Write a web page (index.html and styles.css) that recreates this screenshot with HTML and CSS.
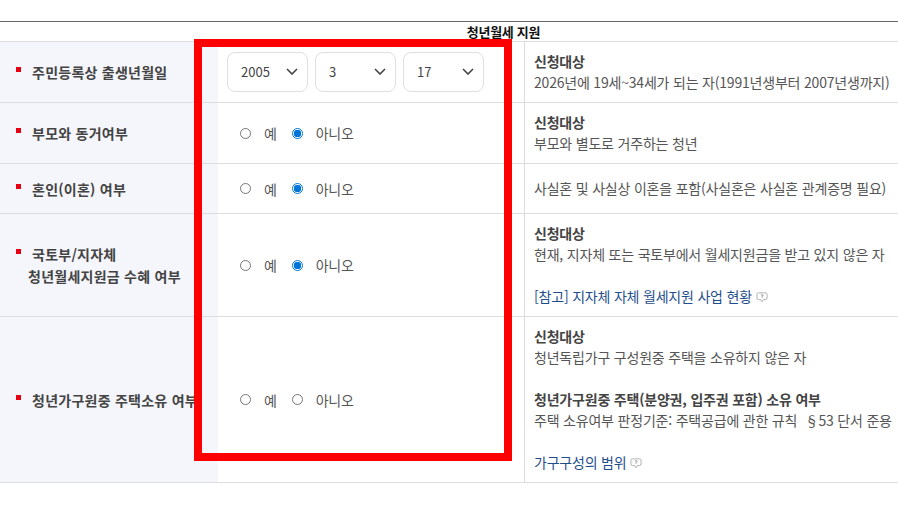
FILE: index.html
```html
<!DOCTYPE html>
<html lang="ko">
    <head>
        <title>청년월세 지원</title>
        <meta charset="utf-8">
        <link rel="stylesheet" href="styles.css">
    </head>
    <body>
        <main class="page">
            <table class="check-table">
                <colgroup>
                    <col class="col-label">
                    <col class="col-field">
                    <col class="col-desc">
                </colgroup>
                <thead>
                    <tr class="row-head">
                        <th colspan="3">청년월세 지원</th>
                    </tr>
                </thead>
                <tbody>
                    <tr class="row-birth">
                        <th><i class="bullet"></i>주민등록상 출생년월일</th>
                        <td class="field">
                            <div class="selects">
                                <div class="select"><span>2005</span><svg class="chev" viewBox="0 0 12 7"><path d="M1 1l5 5 5-5"/></svg></div>
                                <div class="select"><span>3</span><svg class="chev" viewBox="0 0 12 7"><path d="M1 1l5 5 5-5"/></svg></div>
                                <div class="select"><span>17</span><svg class="chev" viewBox="0 0 12 7"><path d="M1 1l5 5 5-5"/></svg></div>
                            </div>
                        </td>
                        <td class="desc">
                            <strong>신청대상</strong><br>
                            2026년에 19세~34세가 되는 자(1991년생부터 2007년생까지)
                        </td>
                    </tr>
                    <tr class="row-parents">
                        <th><i class="bullet"></i>부모와 동거여부</th>
                        <td class="field">
                            <div class="radios">
                                <label><input type="radio" name="parents">예</label>
                                <label><input type="radio" name="parents" checked>아니오</label>
                            </div>
                        </td>
                        <td class="desc">
                            <strong>신청대상</strong><br>
                            부모와 별도로 거주하는 청년
                        </td>
                    </tr>
                    <tr class="row-marriage">
                        <th><i class="bullet"></i>혼인(이혼) 여부</th>
                        <td class="field">
                            <div class="radios">
                                <label><input type="radio" name="marriage">예</label>
                                <label><input type="radio" name="marriage" checked>아니오</label>
                            </div>
                        </td>
                        <td class="desc">사실혼 및 사실상 이혼을 포함(사실혼은 사실혼 관계증명 필요)</td>
                    </tr>
                    <tr class="row-subsidy">
                        <th><i class="bullet"></i>국토부/지자체<br>청년월세지원금 수혜 여부</th>
                        <td class="field">
                            <div class="radios">
                                <label><input type="radio" name="subsidy">예</label>
                                <label><input type="radio" name="subsidy" checked>아니오</label>
                            </div>
                        </td>
                        <td class="desc">
                            <strong>신청대상</strong><br>
                            현재, 지자체 또는 국토부에서 월세지원금을 받고 있지 않은 자<br>
                            <br>
                            <a href="#">[참고] 지자체 자체 월세지원 사업 현황</a>
                            <svg class="help" viewBox="0 0 14 13"><path d="M3 1h8a2 2 0 0 1 2 2v4a2 2 0 0 1-2 2H8.5L7 11.5 5.5 9H3a2 2 0 0 1-2-2V3a2 2 0 0 1 2-2z"/><path class="mark" d="M5.8 3.8c.2-.7 2.4-.8 2.4.4 0 .8-1.2.8-1.2 1.5M7 6.4v.7"/></svg>
                        </td>
                    </tr>
                    <tr class="row-house">
                        <th><i class="bullet"></i>청년가구원중 주택소유 여부</th>
                        <td class="field">
                            <div class="radios">
                                <label><input type="radio" name="house">예</label>
                                <label><input type="radio" name="house">아니오</label>
                            </div>
                        </td>
                        <td class="desc">
                            <strong>신청대상</strong><br>
                            청년독립가구 구성원중 주택을 소유하지 않은 자<br>
                            <br>
                            <strong>청년가구원중 주택(분양권, 입주권 포함) 소유 여부</strong><br>
                            주택 소유여부 판정기준: 주택공급에 관한 규칙 &nbsp;§53 단서 준용<br>
                            <br>
                            <a href="#">가구구성의 범위</a>
                            <svg class="help" viewBox="0 0 14 13"><path d="M3 1h8a2 2 0 0 1 2 2v4a2 2 0 0 1-2 2H8.5L7 11.5 5.5 9H3a2 2 0 0 1-2-2V3a2 2 0 0 1 2-2z"/><path class="mark" d="M5.8 3.8c.2-.7 2.4-.8 2.4.4 0 .8-1.2.8-1.2 1.5M7 6.4v.7"/></svg>
                        </td>
                    </tr>
                </tbody>
            </table>
            <div class="highlight"></div>
        </main>
    </body>
</html>
```

FILE: styles.css
```css
* {
    box-sizing: border-box;
}
html, body {
    margin: 0;
    padding: 0;
    height: 517px;
    overflow: hidden;
    background-color: white;
}
body {
    font-family: "Noto Sans CJK KR", "Noto Sans", sans-serif;
    font-size: 14px;
    color: #555;
}
.page {
    position: relative;
    width: 898px;
    height: 517px;
    padding-top: 21px;
    overflow: hidden;
}
.check-table {
    width: 898px;
    table-layout: fixed;
    border-collapse: separate;
    border-spacing: 0;
    border-top: 1px solid #666;
}
.col-label {
    width: 218px;
}
.col-field {
    width: 307px;
}
.check-table th,
.check-table td {
    padding: 0;
    border-bottom: 1px solid #ddd;
    font-weight: 400;
}
.check-table .row-head th {
    height: 20px;
    font-size: 13px;
    font-weight: 700;
    letter-spacing: -0.3px;
    color: #111;
    text-align: center;
    line-height: 19px;
    padding: 0 0 0 109px;
    background-color: white;
}
.check-table tbody th {
    padding-left: 28px;
    background-color: #f5f6fb;
    text-align: left;
    font-size: 14px;
    font-weight: 700;
    letter-spacing: 0.25px;
    line-height: 22px;
    color: #444;
    white-space: nowrap;
}
.bullet {
    display: inline-block;
    width: 5px;
    height: 5px;
    margin-left: -12px;
    margin-right: 11px;
    vertical-align: 6px;
    background-color: #e60012;
}
.check-table .field {
    padding-left: 9px;
    border-right: 1px solid #ddd;
}
.check-table .desc {
    padding-left: 9px;
    line-height: 21px;
    letter-spacing: -0.2px;
    white-space: nowrap;
}
.desc strong {
    color: #444;
}
.desc a {
    color: #1f4e8c;
    text-decoration: none;
}
.row-birth td, .row-birth th { height: 61px; }
.row-parents td, .row-parents th { height: 61px; }
.row-marriage td, .row-marriage th { height: 50px; }
.row-subsidy td, .row-subsidy th { height: 103px; }
.row-house td, .row-house th { height: 166px; }
.selects {
    display: flex;
    gap: 7px;
}
.select {
    display: flex;
    justify-content: space-between;
    align-items: center;
    width: 81px;
    height: 40px;
    padding: 0 9px 2px 13px;
    border: 1px solid #e0e0e0;
    border-radius: 8px;
    font-size: 13px;
    color: #444;
}
.chev {
    width: 12px;
    height: 7px;
    fill: none;
    stroke: #444;
    stroke-width: 1.6;
}
.radios {
    display: flex;
    gap: 15px;
    padding-left: 13px;
}
.radios label {
    display: flex;
    align-items: center;
    gap: 13px;
    font-size: 14px;
    letter-spacing: -0.2px;
    color: #555;
}
.radios input {
    appearance: none;
    width: 11px;
    height: 11px;
    margin: 0;
    border: 1px solid #767676;
    border-radius: 50%;
    background-color: white;
}
.radios input:checked {
    border-color: #0075d9;
    background: radial-gradient(circle, #0075d9 0 3.5px, white 4px);
}
.help {
    width: 12px;
    height: 11px;
    vertical-align: -1px;
    fill: none;
    stroke: #999;
    stroke-width: 0.9;
}
.help .mark {
    stroke: #567;
}
.highlight {
    position: absolute;
    left: 194px;
    top: 39px;
    width: 318px;
    height: 422px;
    border: 8px solid #ff0000;
}
```
